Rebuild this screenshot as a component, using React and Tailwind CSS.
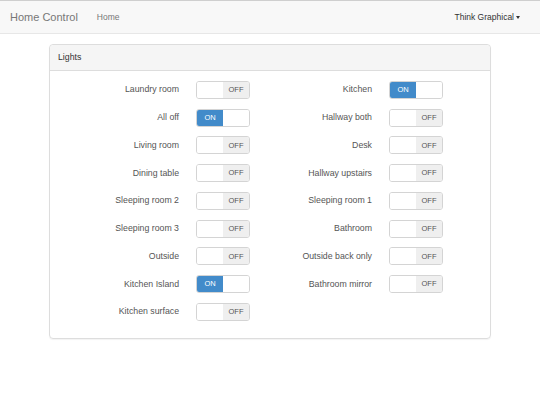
const left = [
  ["Laundry room", false],
  ["All off", true],
  ["Living room", false],
  ["Dining table", false],
  ["Sleeping room 2", false],
  ["Sleeping room 3", false],
  ["Outside", false],
  ["Kitchen Island", true],
  ["Kitchen surface", false],
]

const right = [
  ["Kitchen", true],
  ["Hallway both", false],
  ["Desk", false],
  ["Hallway upstairs", false],
  ["Sleeping room 1", false],
  ["Bathroom", false],
  ["Outside back only", false],
  ["Bathroom mirror", false],
]

const Switch = ({ on }) => (
  <div className="flex w-[54px] h-[18px] rounded-[3px] border border-[#d4d4d4] overflow-hidden text-[7.5px] leading-none">
    {on ? (
      <>
        <div className="w-1/2 flex items-center justify-center bg-[#428bca] text-white">ON</div>
        <div className="w-1/2 bg-white" />
      </>
    ) : (
      <>
        <div className="w-1/2 bg-white" />
        <div className="w-1/2 flex items-center justify-center bg-[#efefef] text-[#555]">OFF</div>
      </>
    )}
  </div>
)

const Row = ({ label, on }) => (
  <div className="flex items-center h-[27.75px]">
    <div className="w-[122px] text-right text-[8.75px] text-[#555]">{label}</div>
    <div className="ml-[17px]">
      <Switch on={on} />
    </div>
  </div>
)

export default function App() {
  return (
    <div className="w-[540px] h-[395px] bg-white" style={{ fontFamily: '"Liberation Sans", Arial, sans-serif' }}>
      <div className="h-[34px] border-t border-[#cfcfcf] border-b border-b-[#e7e7e7] bg-[#f8f8f8] flex items-center pl-[10px] pr-[20px]">
        <span className="text-[11px] text-[#777]">Home Control</span>
        <span className="ml-[19px] text-[8.5px] text-[#777]">Home</span>
        <span className="ml-auto text-[8.5px] text-[#333] flex items-center">
          Think Graphical
          <span className="ml-[2px] w-0 h-0 border-l-[2.5px] border-r-[2.5px] border-t-[3px] border-l-transparent border-r-transparent border-t-[#333]" />
        </span>
      </div>
      <div className="ml-[49px] mt-[10px] w-[442px] border border-[#ddd] rounded-[4px] shadow-[0_1px_1px_rgba(0,0,0,0.05)]">
        <div className="h-[26px] bg-[#f5f5f5] border-b border-[#ddd] rounded-t-[4px] flex items-center pl-[8px] text-[8.75px] text-[#333]">
          Lights
        </div>
        <div className="pl-[7px] pt-[5px] pb-[12px] flex">
          <div className="w-[193px]">
            {left.map(([l, o]) => (
              <Row key={l} label={l} on={o} />
            ))}
          </div>
          <div className="w-[193px]">
            {right.map(([l, o]) => (
              <Row key={l} label={l} on={o} />
            ))}
          </div>
        </div>
      </div>
    </div>
  )
}
